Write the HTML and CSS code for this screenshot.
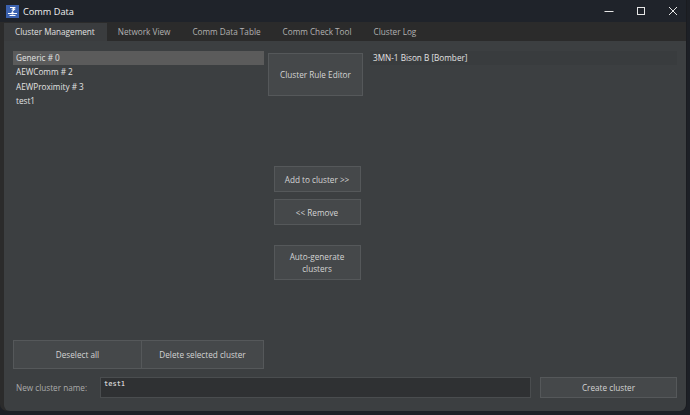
FILE: index.html
```html
<!DOCTYPE html>
<html lang="en">
<head>
    <meta charset="UTF-8">
    <title>Comm Data</title>
    <link rel="stylesheet" href="styles.css">
</head>
<body>
    <div class="window">
        <div class="titlebar">
            <svg class="app-icon" width="13" height="13" viewBox="0 0 13 13">
                <rect width="13" height="13" fill="#3b62b0"/>
                <path d="M4 2.5h4.5l-2 1.8h2l-2.5 2.4" stroke="#fff" stroke-width="1.1" fill="none"/>
                <path d="M2 8.5h9M3.5 10.5h6" stroke="#fff" stroke-width="1"/>
                <circle cx="6.5" cy="8.3" r="1.3" fill="#fff"/>
            </svg>
            <span class="title">Comm Data</span>
            <div class="controls">
                <svg width="12" height="12" viewBox="0 0 12 12"><path d="M1.5 6.5h9" stroke="#e6e6e6" stroke-width="1"/></svg>
                <svg width="12" height="12" viewBox="0 0 12 12"><rect x="2.5" y="2.5" width="7" height="7" stroke="#e6e6e6" stroke-width="1" fill="none"/></svg>
                <svg width="12" height="12" viewBox="0 0 12 12"><path d="M2 2l8 8M10 2l-8 8" stroke="#e6e6e6" stroke-width="1"/></svg>
            </div>
        </div>

        <div class="tabs">
            <div class="tab active">Cluster Management</div>
            <div class="tab">Network View</div>
            <div class="tab">Comm Data Table</div>
            <div class="tab">Comm Check Tool</div>
            <div class="tab">Cluster Log</div>
        </div>

        <div class="panel">
            <div class="main">
                <div class="left-col">
                    <ul class="cluster-list">
                        <li class="selected">Generic # 0</li>
                        <li>AEWComm # 2</li>
                        <li>AEWProximity # 3</li>
                        <li>test1</li>
                    </ul>
                    <div class="split-buttons">
                        <button class="btn">Deselect all</button>
                        <button class="btn">Delete selected cluster</button>
                    </div>
                </div>

                <div class="mid-col">
                    <button class="btn rule-editor">Cluster Rule Editor</button>
                    <div class="move-buttons">
                        <button class="btn small">Add to cluster &gt;&gt;</button>
                        <button class="btn small">&lt;&lt; Remove</button>
                        <button class="btn auto">Auto-generate<br>clusters</button>
                    </div>
                </div>

                <div class="right-col">
                    <ul class="member-list">
                        <li>3MN-1 Bison B [Bomber]</li>
                    </ul>
                </div>
            </div>

            <div class="create-row">
                <label class="name-label" for="clusterName">New cluster name:</label>
                <input class="name-input" id="clusterName" type="text" value="test1">
                <button class="btn create">Create cluster</button>
            </div>
        </div>
    </div>
</body>
</html>
```

FILE: styles.css
```css
body {
    margin: 0;
    background: #1d2026;
    font-family: "Open Sans", "Noto Sans", sans-serif;
    font-size: 8.2px;
    color: #d6d6d6;
    height: 415px;
    overflow: hidden;
}

.window {
    width: 687px;
    height: 411px;
    background: #2b2b2b;
    border-radius: 0 0 7px 7px;
    display: flex;
    flex-direction: column;
    box-sizing: border-box;
    border-right: 1px solid #1a1c20;
    overflow: hidden;
}

.titlebar {
    height: 22px;
    background: #1f232a;
    display: flex;
    align-items: center;
    padding-left: 6px;
}

.app-icon {
    margin-right: 4px;
}

.title {
    font-size: 9.2px;
    color: #f0f0f0;
}

.controls {
    margin-left: auto;
    display: flex;
    gap: 20px;
    margin-right: 7px;
}

.tabs {
    height: 19px;
    display: flex;
    align-items: flex-end;
    margin: 0 4px;
}

.tab {
    height: 18px;
    line-height: 18px;
    padding: 0 11px;
    color: #b2b2b2;
}

.tab.active {
    background: #3a3c3e;
    color: #e0e0e0;
    padding: 0 12px 0 11px;
}

.panel {
    flex: 1;
    margin: 0 0 0 4px;
    background: #3c3f41;
    padding: 10px 9px 13px 9px;
    display: flex;
    flex-direction: column;
    gap: 8px;
    border-radius: 0 0 6px 6px;
}

.main {
    flex: 1;
    display: grid;
    grid-template-columns: 251px 106px 1fr;
}

.left-col {
    display: flex;
    flex-direction: column;
}

ul {
    list-style: none;
    margin: 0;
    padding: 0;
}

.cluster-list {
    flex: 1;
}

.cluster-list li,
.member-list li {
    height: 14.4px;
    line-height: 14px;
    padding-left: 3px;
    color: #e2e2e2;
}

.cluster-list li.selected {
    background: #5b5b5b;
}

.member-list li {
    background: #393c3e;
}

.btn {
    font-family: inherit;
    font-size: 8.2px;
    color: #d4d4d4;
    background: #45484a;
    border: 1px solid #55585a;
    padding: 0;
    cursor: pointer;
}

.split-buttons {
    display: flex;
    height: 29px;
}

.split-buttons .btn {
    flex: 1;
}

.split-buttons .btn + .btn {
    border-left: none;
    flex: 0 0 122px;
}

.mid-col {
    display: flex;
    flex-direction: column;
    align-items: center;
}

.rule-editor {
    width: 95px;
    height: 43px;
    margin-top: 2px;
    margin-right: 3px;
}

.move-buttons {
    display: flex;
    flex-direction: column;
    margin-top: 70px;
    gap: 7px;
}

.btn.small {
    width: 87px;
    height: 26px;
}

.btn.auto {
    width: 87px;
    height: 35px;
    margin-top: 13px;
    line-height: 11.5px;
}

.create-row {
    display: flex;
    align-items: center;
    height: 21px;
}

.name-label {
    width: 84px;
    padding-left: 3px;
    color: #ababab;
}

.name-input {
    width: 431px;
    height: 21px;
    box-sizing: border-box;
    background: #2f3133;
    border: 1px solid #4a4d4f;
    color: #f2f2f2;
    font-family: "DejaVu Sans Mono", monospace;
    font-size: 7px;
    padding: 0 3px 8px 3px;
    outline: none;
}

.btn.create {
    margin-left: 9px;
    width: 137px;
    height: 21px;
}
```
